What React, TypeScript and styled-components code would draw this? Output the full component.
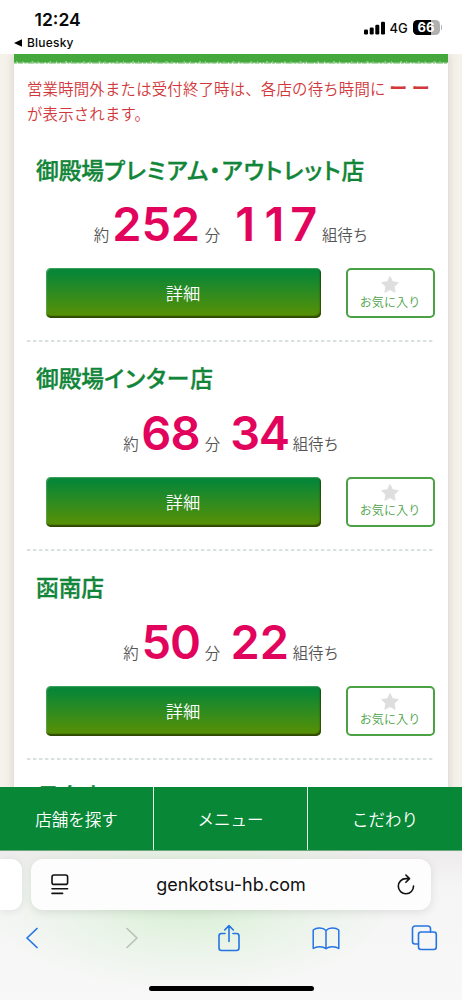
import React from "react";
import styled, { createGlobalStyle } from "styled-components";

const jp = `"Noto Sans CJK JP", sans-serif`;
const latin = `Inter, "Noto Sans CJK JP", sans-serif`;

const Global = createGlobalStyle`
  * { box-sizing: border-box; }
  body { margin: 0; background: #fff; font-family: ${jp}; font-weight: 350; }
  button { font: inherit; margin: 0; padding: 0; cursor: pointer; }
`;

const Phone = styled.div`
  width: 462px;
  height: 1000px;
  display: flex;
  flex-direction: column;
  overflow: hidden;
  background: #fff;
`;

const StatusBar = styled.header`
  flex: none;
  height: 54px;
  padding: 10px 20px 0 14px;
  display: flex;
  justify-content: space-between;
  font-family: ${latin};
  color: #0a0a0a;
`;

const StatusLeft = styled.div`
  display: flex;
  flex-direction: column;
`;

const Clock = styled.div`
  padding-left: 20.5px;
  font-size: 17.5px;
  line-height: 20px;
  font-weight: 600;
`;

const BackLink = styled.div`
  display: flex;
  align-items: center;
  gap: 5px;
  margin-top: 4px;
  font-size: 12px;
  line-height: 17px;
  font-weight: 500;
  letter-spacing: 0.2px;
`;

const StatusRight = styled.div`
  display: flex;
  align-items: center;
  height: 15px;
  margin-top: 10px;
  font-size: 13px;
  font-weight: 500;
`;

const Network = styled.span`
  margin: 0 5px 0 5px;
  width: 18px;
  white-space: nowrap;
`;

const Battery = styled.div`
  width: 27px;
  height: 15px;
  border-radius: 4.5px;
  background: linear-gradient(90deg, #000 67%, #b0b0b0 67%);
  color: #fff;
  font-size: 13px;
  font-weight: 700;
  line-height: 15px;
  text-align: center;
`;

const BatteryCap = styled.div`
  width: 1.5px;
  height: 5px;
  margin-left: 1px;
  border-radius: 0 2px 2px 0;
  background: #b0b0b0;
`;

const Page = styled.main`
  flex: none;
  height: 733px;
  padding: 0 14px;
  overflow: hidden;
  background: #f5f2eb;
`;

const Paper = styled.div`
  height: 760px;
  background: #fff;
  box-shadow: 0 0 9px rgba(110, 100, 85, 0.25);
`;

const Band = styled.svg`
  display: block;
  width: 434px;
  height: 10px;
`;

const Notice = styled.p`
  margin: 0;
  padding: 12px 0 0 13px;
  height: 68.5px;
  color: #d2383b;
  font-size: 15.4px;
  line-height: 24.6px;
  letter-spacing: 0.2px;
  white-space: nowrap;
`;

const Dashes = styled.b`
  font-weight: 700;
  font-size: 18px;
  line-height: 1;
`;

const Store = styled.section`
  height: 208.75px;
  margin: 0 13px;
  padding-top: 21px;
  display: flex;
  flex-direction: column;
`;

const StoreName = styled.h2`
  flex: none;
  margin: 0 0 0 9px;
  height: 32px;
  font-size: 22.7px;
  line-height: 32px;
  font-weight: 500;
  -webkit-text-stroke: 0.35px #118538;
  color: #118538;
  font-feature-settings: "palt";
  white-space: nowrap;
`;

const Kana = styled.span`
  letter-spacing: 0.95px;
`;

const Wait = styled.div`
  flex: none;
  height: 82.5px;
  padding-top: 14.7px;
  display: flex;
  justify-content: center;
  align-items: baseline;
  color: #555;
  white-space: nowrap;
`;

const Unit = styled.span<{ $after?: number }>`
  font-size: 15.4px;
  line-height: 48px;
  margin-right: ${(p) => p.$after ?? 0}px;
`;

const Figure = styled.span<{ $after: number }>`
  display: inline-flex;
  font-family: ${latin};
  font-size: 47px;
  line-height: 48px;
  font-weight: 600;
  color: #e2045c;
  margin-right: ${(p) => p.$after}px;
`;

const Digit = styled.span`
  width: 29.3px;
  display: flex;
  justify-content: center;
`;

const Actions = styled.div`
  flex: none;
  height: 50px;
  padding-left: 19px;
  display: flex;
  justify-content: space-between;
`;

const DetailButton = styled.button`
  width: 275px;
  border: 0;
  border-radius: 5px;
  background: linear-gradient(#078638 8%, #559007 92%);
  box-shadow: inset 1px 1px 1px rgba(120, 190, 130, 0.5),
    inset -1px -2px 1.5px rgba(35, 50, 0, 0.8);
  color: #fff;
  font-size: 17.3px;
  padding: 0 1px 1px 0;
`;

const FavoriteButton = styled.button`
  width: 89px;
  border: 2px solid #4ba245;
  border-radius: 5px;
  background: #fff;
  display: flex;
  flex-direction: column;
  align-items: center;
  padding: 5.5px 1px 0 0;
  color: #4ba245;
  font-size: 12.1px;
  line-height: 18px;
`;

const Divider = styled.svg`
  display: block;
  flex: none;
  width: 408px;
  height: 2px;
  margin-top: 22px;
`;

const SiteNav = styled.nav`
  flex: none;
  height: 64px;
  display: grid;
  grid-template-columns: repeat(3, 1fr);
  background: #088836;
  border-bottom: 1px solid #6aa77a;
`;

const NavItem = styled.a`
  display: flex;
  align-items: center;
  justify-content: center;
  color: #fff;
  font-size: 16.5px;
  border-right: 1px solid #e6f3e8;
  &:last-child { border-right: 0; }
`;

const Browser = styled.footer`
  flex: none;
  height: 149px;
  padding-top: 8px;
  background:
    radial-gradient(ellipse 210px 95px at 190px 48px, rgba(205, 238, 200, 0.8), rgba(220, 241, 217, 0.5) 50%, rgba(246, 248, 246, 0)),
    linear-gradient(#eeebec 0, #f5f5f5 35px, #f8f8f8);
`;

const Tabs = styled.div`
  height: 51px;
  display: flex;
  gap: 9px;
`;

const PreviousTab = styled.div`
  width: 22px;
  background: #fff;
  border-radius: 0 11px 11px 0;
  box-shadow: 0 1px 9px rgba(0, 0, 0, 0.09);
`;

const AddressBar = styled.div`
  width: 400px;
  padding: 0 16px 0 20px;
  display: flex;
  align-items: center;
  justify-content: space-between;
  background: #fdfdfd;
  border-radius: 12px;
  box-shadow: 0 2px 10px rgba(0, 0, 0, 0.1);
  color: #111;
  font-family: ${latin};
  font-weight: 400;
  font-size: 18px;
`;

const Address = styled.span`
  padding-right: 4px;
`;

const Toolbar = styled.div`
  height: 56px;
  padding: 0 24px 0 17px;
  display: flex;
  align-items: center;
  justify-content: space-between;
  color: #2474e4;
`;

const ToolButton = styled.span<{ $nudge?: number }>`
  width: 28px;
  height: 28px;
  display: flex;
  align-items: center;
  justify-content: center;
  padding-left: ${(p) => p.$nudge ?? 0}px;
`;

const HomeIndicator = styled.div`
  width: 165px;
  height: 5.5px;
  margin: 19.5px auto 0 148.5px;
  border-radius: 3px;
  background: #000;
`;

const stores = [
  { name: "御殿場プレミアム・アウトレット店", minutes: 252, groups: 117 },
  { name: "御殿場インター店", minutes: 68, groups: 34 },
  { name: "函南店", minutes: 50, groups: 22 },
];

const Name = ({ text }: { text: string }) => (
  <StoreName>
    {text.split(/([ァ-ー]+)/).map((part, i) => (i % 2 ? <Kana key={i}>{part}</Kana> : part))}
  </StoreName>
);

const Count = ({ value, after }: { value: number; after: number }) => (
  <Figure $after={after}>
    {String(value).split("").map((d, i) => <Digit key={i}>{d}</Digit>)}
  </Figure>
);

const Star = () => (
  <svg width="18" height="17" viewBox="0 0 18 17" fill="#dedede">
    <path d="M9 .6l2.5 5.2 5.8.7-4.2 4 1 5.8L9 13.5l-5.1 2.8 1-5.8-4.2-4 5.8-.7z" stroke="#dedede" strokeLinejoin="round" />
  </svg>
);

const iconStroke = {
  fill: "none",
  stroke: "currentColor",
  strokeLinecap: "round" as const,
  strokeLinejoin: "round" as const,
};

export default function App() {
  return (
    <Phone>
      <Global />
      <StatusBar>
        <StatusLeft>
          <Clock>12:24</Clock>
          <BackLink>
            <svg width="8" height="8" viewBox="0 0 8 8"><path d="M0 4L8 .3v7.4z" /></svg>
            Bluesky
          </BackLink>
        </StatusLeft>
        <StatusRight>
          <svg width="21" height="14" viewBox="0 0 21 14">
            <rect x="0" y="8.5" width="4" height="5" rx="1.2" />
            <rect x="5.7" y="6.5" width="4" height="7" rx="1.2" />
            <rect x="11.3" y="3.7" width="4" height="9.8" rx="1.2" />
            <rect x="17" y=".7" width="4" height="12.8" rx="1.2" />
          </svg>
          <Network>4G</Network>
          <Battery>66</Battery>
          <BatteryCap />
        </StatusRight>
      </StatusBar>

      <Page>
        <Paper>
          <Band viewBox="0 0 434 10">
            <rect width="434" height="8.6" fill="#45a83d" />
            <path d="M0 9H434" stroke="#45a83d" strokeWidth=".8" strokeDasharray="3 1 5 1.5 2 1 7 1" />
            <path d="M2 7.9H434" stroke="#c8e6c4" strokeWidth=".9" strokeDasharray="1.5 5 1 8 2 4 1 11" />
          </Band>
          <Notice>
            営業時間外または受付終了時は、各店の待ち時間に <Dashes>ー ー</Dashes>
            <br />
            が表示されます。
          </Notice>
          {stores.map((s) => (
            <Store key={s.name}>
              <Name text={s.name} />
              <Wait>
                <Unit $after={3}>約</Unit>
                <Count value={s.minutes} after={4.5} />
                <Unit $after={10.5}>分</Unit>
                <Count value={s.groups} after={3.5} />
                <Unit>組待ち</Unit>
              </Wait>
              <Actions>
                <DetailButton>詳細</DetailButton>
                <FavoriteButton>
                  <Star />
                  お気に入り
                </FavoriteButton>
              </Actions>
              <Divider viewBox="0 0 408 2">
                <path d="M0 1H408" stroke="#b3c4bd" strokeWidth="1.2" strokeDasharray="3.4 2.6" />
              </Divider>
            </Store>
          ))}
          <Store>
            <Name text="長泉店" />
          </Store>
        </Paper>
      </Page>

      <SiteNav>
        <NavItem>店舗を探す</NavItem>
        <NavItem>メニュー</NavItem>
        <NavItem>こだわり</NavItem>
      </SiteNav>

      <Browser>
        <Tabs>
          <PreviousTab />
          <AddressBar>
            <svg width="18" height="21" viewBox="0 0 18 21" {...iconStroke} strokeWidth="1.6">
              <rect x="1" y="1" width="15.6" height="9.4" rx="2" />
              <path d="M1 14.8H16.6M1 19.4H11.6" />
            </svg>
            <Address>genkotsu-hb.com</Address>
            <svg width="18" height="21" viewBox="0 0 18 21" {...iconStroke} strokeWidth="1.6">
              <path d="M16.5 12A7.6 7.6 0 1 1 8.9 4.6H12.3M8.9 1L12.5 4.6L8.9 8.2" />
            </svg>
          </AddressBar>
        </Tabs>
        <Toolbar>
          <ToolButton>
            <svg width="15" height="22" viewBox="0 0 15 22" {...iconStroke} strokeWidth="1.7">
              <path d="M13 1.5L3 11L13 20.5" />
            </svg>
          </ToolButton>
          <ToolButton $nudge={6}>
            <svg width="15" height="22" viewBox="0 0 15 22" {...iconStroke} strokeWidth="1.5" stroke="#b7bfb5">
              <path d="M2 1.5L12 11L2 20.5" />
            </svg>
          </ToolButton>
          <ToolButton $nudge={2}>
            <svg width="24" height="28" viewBox="0 0 24 28" {...iconStroke} strokeWidth="1.6">
              <path d="M8 9.5H4.5A2.5 2.5 0 0 0 2 12v12a2.5 2.5 0 0 0 2.5 2.5h15A2.5 2.5 0 0 0 22 24V12a2.5 2.5 0 0 0-2.5-2.5H16M12 17.5V2M7.7 6L12 1.6L16.3 6" />
            </svg>
          </ToolButton>
          <ToolButton>
            <svg width="28" height="23" viewBox="0 0 28 23" {...iconStroke} strokeWidth="1.5">
              <path d="M14 3.5C11 .4 4.5 .4 1.2 3V21.5C4.5 19 11 19 14 21.8C17 19 23.5 19 26.8 21.5V3C23.5 .4 17 .4 14 3.5ZM14 3.5V21.8" />
            </svg>
          </ToolButton>
          <ToolButton>
            <svg width="27" height="26" viewBox="0 0 27 26" {...iconStroke} strokeWidth="1.6">
              <path d="M7.5 19H4A2.5 2.5 0 0 1 1.5 16.5V3.5A2.5 2.5 0 0 1 4 1H17A2.5 2.5 0 0 1 19.5 3.5V7" />
              <rect x="7.5" y="7" width="17.8" height="17.5" rx="2.5" />
            </svg>
          </ToolButton>
        </Toolbar>
        <HomeIndicator />
      </Browser>
    </Phone>
  );
}
